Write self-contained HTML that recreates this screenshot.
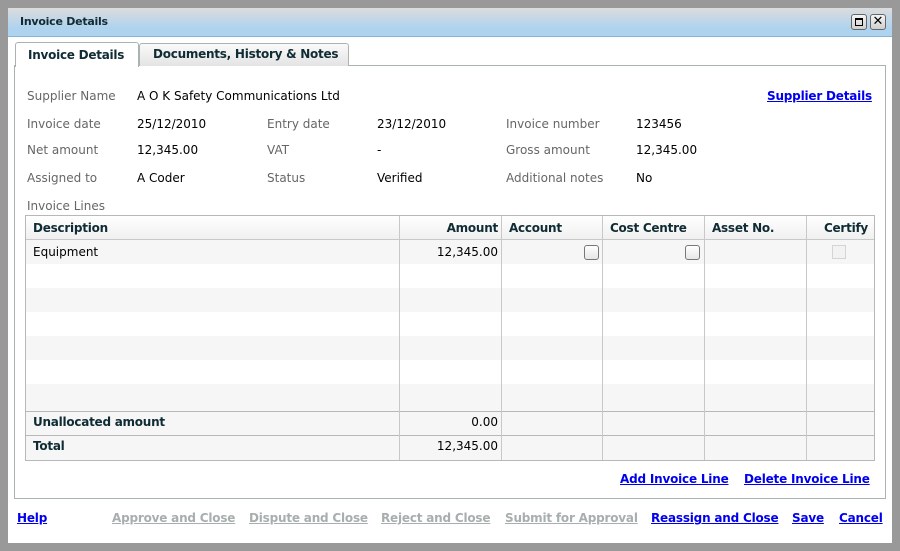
<!DOCTYPE html>
<html><head><meta charset="utf-8"><style>
*{margin:0;padding:0;box-sizing:border-box}
body{width:900px;height:551px;background:#999;position:relative;overflow:hidden;font-family:"DejaVu Sans","Liberation Sans",sans-serif;font-size:12px;color:#000}
.a{position:absolute;white-space:nowrap;line-height:14px}
.l{color:#666}
.b{font-weight:bold;color:#0f2b33;font-size:12px;letter-spacing:-0.25px}
.lk{font-weight:bold;color:#0000ee;text-decoration:underline;letter-spacing:-0.2px}
.dis{font-weight:bold;color:#a8aeae;text-decoration:underline;letter-spacing:-0.2px}
#dlg{position:absolute;left:8px;top:8px;width:884px;height:535px;background:#fff}
#tb{position:absolute;left:8px;top:8px;width:884px;height:29px;background:linear-gradient(#dcdcdc,#afd3ee 70%,#aed3ee);border-bottom:1px solid #86b4d6}
.btn{position:absolute;top:14px;width:16px;height:16px;border:1px solid #666;border-radius:3px;background:linear-gradient(#f4f4f4,#cfcfcf)}
#panel{position:absolute;left:14px;top:65px;width:872px;height:434px;border:1px solid #aab2b2}
.tab{position:absolute;top:42px;height:24px;border:1px solid #aab2b2;border-bottom:none;border-radius:3px 3px 0 0}
.vl{position:absolute;top:216px;width:1px;height:244px;background:#c8c8c8}
.row{position:absolute;left:26px;width:848px;height:24px}
.cb{position:absolute;width:15px;height:15px;border:1px solid #777;border-radius:3px;background:linear-gradient(#fff,#e6e6e6)}
</style></head><body>
<div id="dlg"></div>
<div id="tb"></div>
<div class="a b" style="left:20px;top:15px;font-size:11px">Invoice Details</div>
<div class="btn" style="left:851px"><div style="position:absolute;left:3px;top:3px;width:8px;height:8px;border:1.5px solid #000;border-top-width:2px"></div></div>
<div class="btn" style="left:870px;font-weight:bold;font-size:13px;line-height:13px;text-align:center">✕</div>

<div id="panel"></div>
<div class="tab" style="left:139px;width:210px;background:linear-gradient(#fafafa,#e4e4e4);height:23px;top:43px"></div>
<div class="tab" style="left:15px;width:124px;background:#fff;height:25px"></div>
<div class="a b" style="left:28px;top:48px">Invoice Details</div>
<div class="a b" style="left:153px;top:47px">Documents, History &amp; Notes</div>

<div class="a l" style="left:27px;top:89px">Supplier Name</div>
<div class="a" style="left:137px;top:89px">A O K Safety Communications Ltd</div>
<div class="a lk" style="left:767px;top:89px">Supplier Details</div>

<div class="a l" style="left:27px;top:117px">Invoice date</div>
<div class="a" style="left:137px;top:117px">25/12/2010</div>
<div class="a l" style="left:267px;top:117px">Entry date</div>
<div class="a" style="left:377px;top:117px">23/12/2010</div>
<div class="a l" style="left:506px;top:117px">Invoice number</div>
<div class="a" style="left:636px;top:117px">123456</div>

<div class="a l" style="left:27px;top:143px">Net amount</div>
<div class="a" style="left:137px;top:143px">12,345.00</div>
<div class="a l" style="left:267px;top:143px">VAT</div>
<div class="a" style="left:377px;top:143px">-</div>
<div class="a l" style="left:506px;top:143px">Gross amount</div>
<div class="a" style="left:636px;top:143px">12,345.00</div>

<div class="a l" style="left:27px;top:171px">Assigned to</div>
<div class="a" style="left:137px;top:171px">A Coder</div>
<div class="a l" style="left:267px;top:171px">Status</div>
<div class="a" style="left:377px;top:171px">Verified</div>
<div class="a l" style="left:506px;top:171px">Additional notes</div>
<div class="a" style="left:636px;top:171px">No</div>

<div class="a l" style="left:27px;top:199px">Invoice Lines</div>

<div class="row" style="top:216px;background:linear-gradient(#fff,#f0f0f0);border-bottom:1px solid #c8c8c8"></div>
<div class="row" style="top:240px;background:#f6f6f6"></div>
<div class="row" style="top:288px;background:#f6f6f6"></div>
<div class="row" style="top:336px;background:#f6f6f6"></div>
<div class="row" style="top:384px;background:#f6f6f6;height:28px"></div>
<div class="row" style="top:411px;height:49px;background:#f6f6f6;border-top:1px solid #b8b8b8"></div>
<div class="row" style="top:435px;height:1px;background:#b8b8b8"></div>
<div style="position:absolute;left:25px;top:215px;width:850px;height:246px;border:1px solid #b8b8b8"></div>
<div class="vl" style="left:399px"></div>
<div class="vl" style="left:501px"></div>
<div class="vl" style="left:602px"></div>
<div class="vl" style="left:704px"></div>
<div class="vl" style="left:806px"></div>

<div class="a b" style="left:33px;top:221px">Description</div>
<div class="a b" style="left:399px;width:99px;text-align:right;top:221px">Amount</div>
<div class="a b" style="left:509px;top:221px">Account</div>
<div class="a b" style="left:610px;top:221px">Cost Centre</div>
<div class="a b" style="left:712px;top:221px">Asset No.</div>
<div class="a b" style="left:806px;width:62px;text-align:right;top:221px">Certify</div>

<div class="a" style="left:33px;top:245px">Equipment</div>
<div class="a" style="left:399px;width:99px;text-align:right;top:245px">12,345.00</div>
<div class="cb" style="left:584px;top:245px"></div>
<div class="cb" style="left:685px;top:245px"></div>
<div style="position:absolute;left:832px;top:245px;width:14px;height:14px;border:1px solid #d4d4d4;background:#f2f2f2"></div>

<div class="a b" style="left:33px;top:415px">Unallocated amount</div>
<div class="a" style="left:399px;width:99px;text-align:right;top:415px">0.00</div>
<div class="a b" style="left:33px;top:439px">Total</div>
<div class="a" style="left:399px;width:99px;text-align:right;top:439px">12,345.00</div>

<div class="a lk" style="left:620px;top:472px">Add Invoice Line</div>
<div class="a lk" style="left:744px;top:472px">Delete Invoice Line</div>

<div class="a lk" style="left:17px;top:511px">Help</div>
<div class="a dis" style="left:112px;top:511px">Approve and Close</div>
<div class="a dis" style="left:249px;top:511px">Dispute and Close</div>
<div class="a dis" style="left:381px;top:511px">Reject and Close</div>
<div class="a dis" style="left:505px;top:511px">Submit for Approval</div>
<div class="a lk" style="left:651px;top:511px">Reassign and Close</div>
<div class="a lk" style="left:792px;top:511px">Save</div>
<div class="a lk" style="left:839px;top:511px">Cancel</div>
</body></html>
